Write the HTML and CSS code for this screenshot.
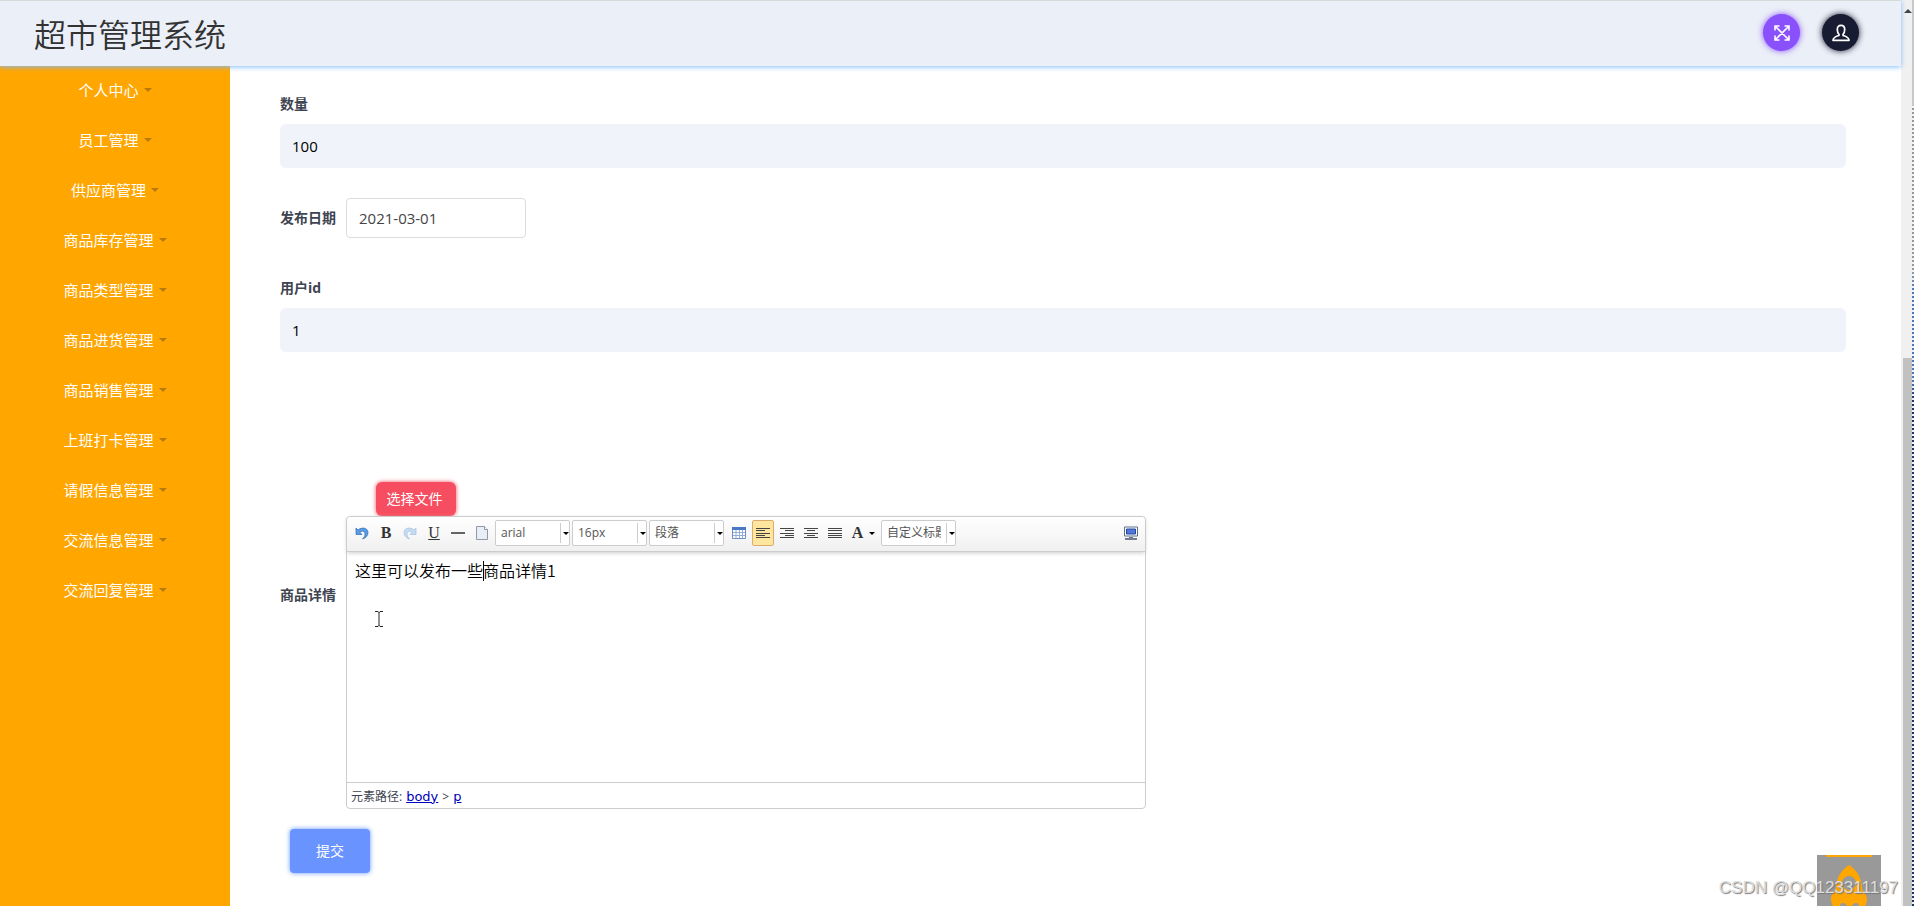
FILE: index.html
```html
<!DOCTYPE html>
<html lang="zh-CN">
<head>
<meta charset="utf-8">
<title>超市管理系统</title>
<link rel="stylesheet" href="styles.css">
</head>
<body>
<div class="app">
  <header class="topbar">
    <h1 class="brand">超市管理系统</h1>
    <div class="actions">
      <button class="round round-purple" type="button" aria-label="全屏">
        <svg width="18" height="18" viewBox="0 0 18 18" fill="none" stroke="#fff" stroke-width="1.6"><path d="M3 3l12 12M15 3L3 15M2 6.500V2h4.500M11.500 2H16v4.500M16 11.500V16h-4.500M6.500 16H2v-4.500"/></svg>
      </button>
      <button class="round round-dark" type="button" aria-label="用户">
        <svg width="18" height="18" viewBox="0 0 18 18" fill="none" stroke="#fff" stroke-width="1.7" stroke-linejoin="round"><path d="M7 10.300C5.500 9 5.300 7.200 5.300 5.500 5.300 3 6.500 1.300 9 1.300s3.700 1.700 3.700 4.200c0 1.700-.2 3.500-1.700 4.800v1.200c2.600.8 6 1.800 6 4.800H1c0-3 3.400-4 6-4.800z"/></svg>
      </button>
    </div>
  </header>
  <div class="layout">
    <nav class="sidebar">
      <a class="menu" href="#">个人中心</a>
      <a class="menu" href="#">员工管理</a>
      <a class="menu" href="#">供应商管理</a>
      <a class="menu" href="#">商品库存管理</a>
      <a class="menu" href="#">商品类型管理</a>
      <a class="menu" href="#">商品进货管理</a>
      <a class="menu" href="#">商品销售管理</a>
      <a class="menu" href="#">上班打卡管理</a>
      <a class="menu" href="#">请假信息管理</a>
      <a class="menu" href="#">交流信息管理</a>
      <a class="menu" href="#">交流回复管理</a>
    </nav>
    <form class="form">
      <div class="field">
        <label for="qty">数量</label>
        <input class="filled" id="qty" type="text" value="100">
      </div>
      <div class="field-row">
        <label for="date">发布日期</label>
        <input class="outlined" id="date" type="text" value="2021-03-01">
      </div>
      <div class="field">
        <label for="uid">用户id</label>
        <input class="filled" id="uid" type="text" value="1">
      </div>
      <div class="detail">
        <span class="detail-label" id="detail-label">商品详情</span>
        <div class="detail-body">
          <button class="file" type="button">选择文件</button>
          <div class="editor">
            <div class="toolbar">
              <button class="tool" type="button" aria-label="撤销"><svg width="14" height="14" viewBox="0 0 14 14"><path d="M1 2v6.500h6L5 6.500C7 4.500 10 5 10 8c0 2-1 3.500-2.500 5C11 12 13 9.500 13 6.500 13 2 7 .500 3 4z" fill="#5b9be0" stroke="#2f6fba" stroke-width=".7"/></svg></button>
              <button class="tool letter" type="button" aria-label="加粗"><b>B</b></button>
              <button class="tool faded" type="button" aria-label="重做"><svg width="14" height="14" viewBox="0 0 14 14"><path d="M13 2v6.500H7l2-2C7 4.500 4 5 4 8c0 2 1 3.500 2.500 5C3 12 1 9.500 1 6.500 1 2 7 .500 11 4z" fill="#b9d6f2" stroke="#8db4dc" stroke-width=".7"/></svg></button>
              <button class="tool letter" type="button" aria-label="下划线"><u>U</u></button>
              <button class="tool" type="button" aria-label="分隔线"><svg width="14" height="14"><path d="M0 7h14" stroke="#333" stroke-width="1.500"/></svg></button>
              <button class="tool" type="button" aria-label="清空"><svg width="14" height="16" viewBox="0 0 14 16"><path d="M1.500 1.500h8l3 3v10h-11z" fill="#e9edf5" stroke="#9299a6"/><path d="M9.500 1.500v3h3" fill="#fff" stroke="#9299a6"/></svg></button>
              <span class="combo"><select aria-label="字体"><option>arial</option></select><i></i></span>
              <span class="combo"><select aria-label="字号"><option>16px</option></select><i></i></span>
              <span class="combo"><select aria-label="段落格式"><option>段落</option></select><i></i></span>
              <button class="tool table" type="button" aria-label="表格"><svg width="14" height="14" viewBox="0 0 14 14"><path d="M.500 1.500h13v11H.500z" fill="#fff" stroke="#6f8fc4"/><path d="M0 1h14v3H0z" fill="#4a78c8"/><path d="M1 6.500h12M1 9.500h12M4 4v8M7.500 4v8M10.500 4v8" stroke="#93add6"/></svg></button>
              <button class="tool active" type="button" aria-label="左对齐"><svg width="14" height="12"><path d="M0 1.500h14M0 3.500h9M0 6.500h14M0 8.500h9M0 10.500h14" stroke="#444"/></svg></button>
              <button class="tool" type="button" aria-label="右对齐"><svg width="14" height="12"><path d="M0 1.500h14M5 3.500h9M0 6.500h14M5 8.500h9M0 10.500h14" stroke="#444"/></svg></button>
              <button class="tool" type="button" aria-label="居中"><svg width="14" height="12"><path d="M0 1.500h14M3 3.500h8M0 6.500h14M3 8.500h8M0 10.500h14" stroke="#444"/></svg></button>
              <button class="tool" type="button" aria-label="两端对齐"><svg width="14" height="12"><path d="M0 1.500h14M0 3.500h14M0 6.500h14M0 8.500h14M0 10.500h14" stroke="#444"/></svg></button>
              <button class="tool letter wide" type="button" aria-label="字体颜色"><b>A</b><i></i></button>
              <span class="combo"><select aria-label="自定义标题"><option>自定义标题</option></select><i></i></span>
              <button class="tool screen" type="button" aria-label="全屏编辑"><svg width="14" height="14" viewBox="0 0 14 14"><path d="M.500 1h13v9H.500z" fill="#fff" stroke="#5d6f8c"/><path d="M2.500 3h9v5h-9z" fill="#5279d8" stroke="#2346a0"/><path d="M5 11.500h4" stroke="#777"/><path d="M1 13h12" stroke="#45546e" stroke-width="1.500"/></svg></button>
            </div>
            <div class="content" contenteditable="true" role="textbox" aria-labelledby="detail-label">这里可以发布一些<span class="caret"></span>商品详情1</div>
            <div class="path"><span>元素路径:</span><a href="#">body</a><span>&gt;</span><a href="#">p</a></div>
            <svg class="pointer" width="8" height="18" viewBox="0 0 8 18" fill="none" stroke="#222"><path d="M0 1.500h3l1 1 1-1h3M4 2v14M0 16.500h3l1-1 1 1h3"/></svg>
          </div>
        </div>
      </div>
      <button class="submit" type="submit">提交</button>
    </form>
  </div>
</div>
<div class="scroll"><span class="scroll-up"></span><span class="thumb"></span></div>
<div class="edge"></div>
<a class="to-top" href="#" aria-label="返回顶部">
  <svg width="64" height="51" viewBox="0 0 64 51" fill="#ffa600"><path d="M9 0h46v2H9z"/><path fill-rule="evenodd" d="M32 10c-7 4-13 13-13 23 0 4-5 5-5 11 0 3 1 5 2 7h7c0-2 1-3 3-3s3 1 4 3h5c1-2 2-3 4-3s3 1 3 3h6c1-2 2-4 2-7 0-6-5-7-5-11 0-10-6-19-13-23zm0 11a7 7 0 1 1 0 14 7 7 0 0 1 0-14z"/></svg>
</a>
<div class="watermark">CSDN @QQ123311197</div>
</body>
</html>
```
FILE: styles.css
```css
* { box-sizing: border-box; }

body {
  margin: 0;
  height: 100vh;
  display: flex;
  overflow: hidden;
  position: relative;
  background: #fff;
  color: #3e4451;
  font: 14px/20px "Open Sans", "Noto Sans CJK SC", sans-serif;
}

button, input, select { font: inherit; margin: 0; }
button { border: 0; padding: 0; cursor: pointer; }

.app { flex: 1; min-width: 0; display: flex; flex-direction: column; }

.topbar {
  flex: none;
  height: 66px;
  display: flex;
  align-items: center;
  justify-content: space-between;
  padding: 0 42px 2px 34px;
  background: #ebeff7;
  border-top: 1px solid #d5dada;
  box-shadow: 0 1px 5px #7fbcff;
  position: relative;
}
.brand {
  margin: 0;
  color: #333;
  font: 350 32px/48px "Noto Sans CJK SC", sans-serif;
}
.actions { display: flex; gap: 22px; }
.round {
  width: 37px;
  height: 37px;
  border-radius: 50%;
  display: grid;
  place-items: center;
}
.round-purple { background: #8950fc; box-shadow: 0 0 6px #8950fc; }
.round-dark { background: #181c32; box-shadow: 0 0 6px #181c32; }

.layout { flex: 1; display: flex; }
.sidebar { width: 230px; flex: none; background: #ffa600; }
.menu {
  height: 50px;
  display: flex;
  align-items: center;
  justify-content: center;
  gap: 5px;
  padding-bottom: 2px;
  color: #fff;
  font-size: 15px;
  text-decoration: none;
}
.menu::after {
  content: "";
  border: 4px solid transparent;
  border-top-color: #b87a0c;
  border-bottom: 0;
}

.form { flex: 1; min-width: 0; padding: 28px 55px 0 50px; }
label, .detail-label { font-weight: 700; }
.field { display: flex; flex-direction: column; gap: 10px; }
.filled {
  height: 44px;
  padding: 0 12px;
  border: 0;
  border-radius: 6px;
  background: #f0f3f9;
  color: #000;
  font-size: 15px;
}
.field-row { display: flex; align-items: center; gap: 10px; margin: 30px 0 40px; }
.outlined {
  width: 180px;
  height: 40px;
  padding: 0 12px;
  border: 1px solid #dcdcdc;
  border-radius: 4px;
  background: #fff;
  color: #444;
  font-size: 15px;
}

.detail { display: flex; gap: 10px; margin-top: 130px; }
.detail-label { padding-top: 103px; }
.detail-body { width: 800px; }
.file {
  display: block;
  width: 80px;
  height: 34px;
  margin-left: 30px;
  padding-right: 3px;
  border-radius: 6px;
  background: #f64e60;
  box-shadow: 0 0 4px #f64e60;
  color: #fff;
}
.editor {
  position: relative;
  border: 1px solid #ccc;
  border-radius: 4px;
  background: #fff;
}
.toolbar {
  display: flex;
  align-items: center;
  gap: 2px;
  height: 35px;
  padding: 0 3px 2px 4px;
  border-bottom: 1px solid #ccc;
  border-radius: 4px 4px 0 0;
  background: linear-gradient(#fff, #f0f0f0);
  box-shadow: 0 1px 4px #ccc;
}
.tool {
  flex: none;
  width: 22px;
  height: 26px;
  display: flex;
  align-items: center;
  justify-content: center;
  gap: 6px;
  background: none;
  color: #333;
}
.letter { font: 16px/20px "Liberation Serif", serif; }
.wide { width: 31px; }
.faded { opacity: .8; }
.table { margin-left: 2px; }
.active { background: #ffe69f; border: 1px solid #dcac6c; border-radius: 2px; }
.screen { margin-left: auto; }
.combo {
  flex: none;
  display: flex;
  width: 75px;
  height: 26px;
  border: 1px solid #ccc;
  border-radius: 2px;
  background: #fff;
  align-items: center;
}
.combo select {
  width: 65px;
  height: 20px;
  padding: 0 5px;
  border: 0;
  border-right: 1px solid #ccc;
  appearance: none;
  background: none;
  color: #555;
  font-size: 12px;
}
.combo i, .wide i {
  border: 3px solid transparent;
  border-top-color: #000;
  border-bottom: 0;
}
.combo i { margin-left: 2px; }
.content {
  height: 230px;
  padding: 6px 8px;
  color: #000;
  font: 350 16px/24px "Noto Sans CJK SC", sans-serif;
}
.caret {
  display: inline-block;
  width: 1px;
  height: 20px;
  margin-right: -1px;
  background: #000;
  vertical-align: -4px;
}
.path {
  display: flex;
  align-items: center;
  gap: 4px;
  height: 26px;
  padding: 2px 4px 0;
  border-top: 1px solid #ccc;
  font-size: 12px;
}
.path a { color: #00b; font-family: "DejaVu Sans", sans-serif; font-size: 13px; }
.pointer { position: absolute; left: 28px; top: 93px; }

.submit {
  display: block;
  width: 80px;
  height: 44px;
  margin: 20px 0 0 10px;
  border-radius: 4px;
  background: #6993ff;
  box-shadow: 0 0 5px #6993ff;
  color: #fff;
}

.scroll {
  flex: none;
  width: 11px;
  background: #f0f0f0;
  display: flex;
  flex-direction: column;
  align-items: flex-end;
}
.scroll-up {
  margin: 9px 0 0;
  border: 4px solid transparent;
  border-bottom-color: #444;
  border-top: 0;
}
.thumb { flex: 1; width: 9px; margin-top: 345px; background: #c1c1c1; }
.edge {
  flex: none;
  width: 2px;
  background:
    linear-gradient(#c8c8c8, #c8c8c8) 0 0 / 2px 106px no-repeat,
    repeating-linear-gradient(transparent 0 2px, #eef3fa 2px 4px),
    linear-gradient(#999 30%, #4a78bd 32%, #4a78bd 42%, #1c3468 44%);
}

.to-top { position: absolute; right: 33px; bottom: 0; height: 51px; background: #999; }
.to-top svg { display: block; }
.watermark {
  position: absolute;
  right: 16px;
  bottom: 8px;
  color: #ddd;
  font: 17px/20px "Liberation Sans", Arial, sans-serif;
  text-shadow: 1px 1px 1px #777;
}
```
